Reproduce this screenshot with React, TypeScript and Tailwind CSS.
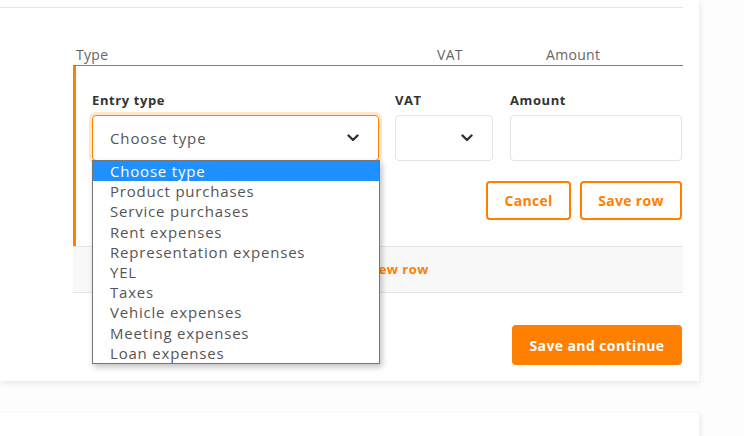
import React from "react";

const options = [
  "Choose type",
  "Product purchases",
  "Service purchases",
  "Rent expenses",
  "Representation expenses",
  "YEL",
  "Taxes",
  "Vehicle expenses",
  "Meeting expenses",
  "Loan expenses",
];

function Chevron() {
  return (
    <svg width="12" height="8" viewBox="0 0 12 8" fill="none">
      <polyline points="1.5,1.5 6,6 10.5,1.5" stroke="#2f343a" strokeWidth="2.4" strokeLinecap="round" strokeLinejoin="round" />
    </svg>
  );
}

export default function App() {
  return (
    <div className="w-[744px] h-[436px] overflow-hidden bg-[#fdfdfd] font-['Open_Sans',sans-serif]">
      <div className="w-[699px] bg-white shadow-[1px_2px_6px_rgba(0,0,0,0.09)] pr-4 pt-[7px] pb-[16px]">
        <div className="border-t border-[#e6e6e6]" />
        <div className="ml-[73px] mt-[36px]">
          <div className="flex items-center h-[22px] border-b border-[#7b8288] pl-[3px] text-[14px] leading-[18px] tracking-[0.3px] text-[#666]">
            <div className="w-[361px]">Type</div>
            <div className="w-[109px]">VAT</div>
            <div>Amount</div>
          </div>
          <div className="border-l-[3px] border-[#ff8000] pl-4 pt-[25px] pb-[26px]">
            <div className="flex">
              <div className="w-[287px]">
                <div className="text-[13px] leading-[18px] font-bold tracking-[0.6px] text-[#333] mb-[6px]">Entry type</div>
                <div className="relative">
                  <div className="h-[46px] rounded-[4px] border border-[#ff8000] shadow-[0_0_0_3px_rgba(255,160,60,0.28)] flex items-center justify-between pl-[17px] pr-[19px] text-[15px] tracking-[0.9px] text-[#555]">
                    <span>Choose type</span>
                    <Chevron />
                  </div>
                  <div className="absolute top-[45px] left-0 w-[288px] z-10 bg-white border border-[#767676] shadow-[2px_3px_6px_rgba(0,0,0,0.25)] text-[15px] leading-[20.2px] tracking-[0.8px] text-[#555]">
                    {options.map((o, i) => (
                      <div
                        key={o}
                        className={
                          i === 0
                            ? "pl-[17px] bg-[#1e90ff] text-white"
                            : "pl-[17px]"
                        }
                      >
                        {o}
                      </div>
                    ))}
                  </div>
                </div>
              </div>
              <div className="w-[98px] ml-4">
                <div className="text-[13px] leading-[18px] font-bold tracking-[0.6px] text-[#333] mb-[6px]">VAT</div>
                <div className="h-[46px] rounded-[4px] border border-[#e3e3e3] flex items-center justify-end pr-[19px]">
                  <Chevron />
                </div>
              </div>
              <div className="w-[172px] ml-[17px]">
                <div className="text-[13px] leading-[18px] font-bold tracking-[0.6px] text-[#333] mb-[6px]">Amount</div>
                <div className="h-[46px] rounded-[4px] border border-[#e3e3e3]" />
              </div>
            </div>
            <div className="flex justify-end gap-[9px] mt-[20px] pr-px">
              <button className="w-[85px] h-[39px] rounded-[4px] border-2 border-[#ff8000] text-[#ff8000] text-[14px] font-bold tracking-[0.3px]">Cancel</button>
              <button className="w-[102px] h-[39px] rounded-[4px] border-2 border-[#ff8000] text-[#ff8000] text-[14px] font-bold tracking-[0.3px]">Save row</button>
            </div>
          </div>
          <div className="h-[47px] bg-[#f8f8f8] border-y border-[#e5e5e5] flex items-center justify-center text-[13px] font-bold tracking-[0.5px] text-[#ff8000]">
            <span>+ Add new row</span>
          </div>
          <div className="flex justify-end mt-[32px] pr-px">
            <button className="w-[170px] h-[40px] rounded-[4px] bg-[#ff8000] text-white text-[14px] font-bold tracking-[0.4px]">Save and continue</button>
          </div>
        </div>
      </div>
      <div className="w-[699px] h-[100px] mt-[32px] bg-white shadow-[1px_2px_6px_rgba(0,0,0,0.09)]" />
    </div>
  );
}
